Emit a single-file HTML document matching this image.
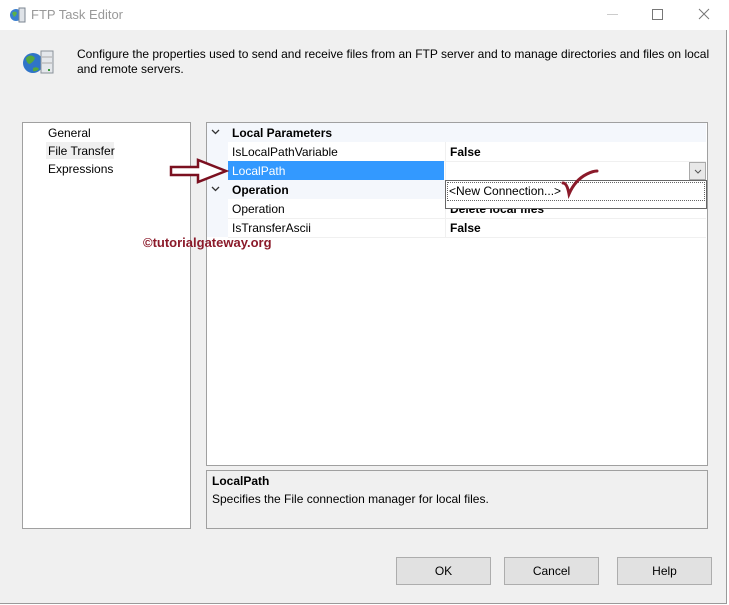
<!DOCTYPE html>
<html><head><style>
body{margin:0;width:729px;height:605px;background:#fff;font-family:"Liberation Sans",sans-serif;font-size:12px;color:#000;position:relative;overflow:hidden}
.a{position:absolute}
.win{left:0;top:30px;width:726px;height:573px;background:#f0f0f0;border-right:1px solid #9a9a9a;border-bottom:1px solid #9a9a9a}
.row{position:absolute;left:228px;width:478px;height:19px;border-bottom:1px solid #f0f0f0}
.lab{position:absolute;left:4px;top:3px}
.val{position:absolute;left:222px;top:3px;font-weight:bold}
.btn{position:absolute;top:557px;width:93px;height:26px;background:#e1e1e1;border:1px solid #adadad;text-align:center;line-height:26px}
</style></head><body>
<div class="a win"></div>
<svg class="a" style="left:9px;top:6px" width="17" height="17"><circle cx="7" cy="9" r="6" fill="#3a7fd0"/><path d="M3 7 q3-3 5 0 q-1 3-3 4z" fill="#5cb04a"/><rect x="10" y="2" width="6" height="14" fill="#dfe3e8" stroke="#7b8590"/></svg>
<div class="a" style="left:31px;top:7px;color:#999;font-size:13px">FTP Task Editor</div>
<div class="a" style="left:607px;top:14px;width:11px;height:1px;background:#ccc"></div>
<div class="a" style="left:652px;top:9px;width:9px;height:9px;border:1px solid #777"></div>
<svg class="a" style="left:698px;top:8px" width="12" height="12"><path d="M1 1 L11 11 M11 1 L1 11" stroke="#777" stroke-width="1"/></svg>
<svg class="a" style="left:21px;top:48px" width="34" height="28"><circle cx="12" cy="15" r="10" fill="#2f74c8"/><path d="M5 10 q5-5 9 0 q-2 5-6 6 q-3-2-3-6z M12 20 q4-2 6 1 q-3 3-6 2z" fill="#54a83e"/><rect x="20" y="3" width="12" height="22" fill="#e4e7eb" stroke="#8a929a"/><line x1="21" y1="9" x2="31" y2="9" stroke="#aaa"/><line x1="21" y1="15" x2="31" y2="15" stroke="#aaa"/><rect x="27" y="21" width="2" height="2" fill="#3a9a3a"/></svg>
<div class="a" style="left:77px;top:47px;line-height:15px;width:640px">Configure the properties used to send and receive files from an FTP server and to manage directories and files on local and remote servers.</div>
<div class="a" style="left:22px;top:122px;width:167px;height:405px;background:#fff;border:1px solid #a0a0a0"></div>
<div class="a" style="left:48px;top:126px">General</div>
<div class="a" style="left:46px;top:142px;width:68px;height:17px;background:#f0f0f0"></div>
<div class="a" style="left:48px;top:144px">File Transfer</div>
<div class="a" style="left:48px;top:162px">Expressions</div>
<div class="a" style="left:206px;top:122px;width:500px;height:342px;background:#fff;border:1px solid #a0a0a0"></div>
<div class="a" style="left:207px;top:123px;width:21px;height:114px;background:#f4f7fc"></div>
<div class="a" style="left:207px;top:123px;width:499px;height:19px;background:#f4f7fc"></div>
<svg class="a" style="left:211px;top:129px" width="9" height="6"><path d="M1 1 L4.5 4.5 L8 1" stroke="#333" stroke-width="1.3" fill="none"/></svg>
<div class="a" style="left:232px;top:126px;font-weight:bold">Local Parameters</div>
<div class="row" style="top:142px"><span class="lab">IsLocalPathVariable</span><span class="val">False</span></div>
<div class="row" style="top:161px"><div class="a" style="left:0;top:0;width:216px;height:19px;background:#3399ff"></div><span class="lab" style="color:#fff">LocalPath</span>
<div class="a" style="left:461px;top:1px;width:15px;height:16px;background:#e8e8e8;border:1px solid #aaa"><svg class="a" style="left:4px;top:6px" width="8" height="5"><path d="M1 1 L4 4 L7 1" stroke="#555" fill="none"/></svg></div></div>
<div class="a" style="left:207px;top:180px;width:499px;height:19px;background:#f4f7fc"></div>
<svg class="a" style="left:211px;top:186px" width="9" height="6"><path d="M1 1 L4.5 4.5 L8 1" stroke="#333" stroke-width="1.3" fill="none"/></svg>
<div class="a" style="left:232px;top:183px;font-weight:bold">Operation</div>
<div class="row" style="top:199px"><span class="lab">Operation</span><span class="val">Delete local files</span></div>
<div class="row" style="top:218px"><span class="lab">IsTransferAscii</span><span class="val">False</span></div>
<div class="a" style="left:445px;top:142px;width:1px;height:95px;background:#f0f0f0"></div>
<div class="a" style="left:445px;top:180px;width:260px;height:27px;background:#fff;border:1px solid #666"><div class="a" style="left:1px;top:1px;width:256px;height:17px;border:1px dotted #666"></div><span class="a" style="left:3px;top:3px">&lt;New Connection...&gt;</span></div>
<svg class="a" style="left:560px;top:165px" width="50" height="35"><path d="M3 18 q4 0 6 11 q6-14 18-20 q6-3 10-3" stroke="#8b1a2a" stroke-width="3" fill="none" stroke-linecap="round"/></svg>
<svg class="a" style="left:168px;top:158px" width="62" height="26"><path d="M3 9 H30 V2 L58 13 L30 24 V17 H3 Z" fill="#fff" stroke="#7b1020" stroke-width="2.5"/></svg>
<div class="a" style="left:143px;top:235px;color:#8b1a2a;font-weight:bold;font-size:13px">©tutorialgateway.org</div>
<div class="a" style="left:206px;top:470px;width:500px;height:57px;border:1px solid #a0a0a0;background:#f0f0f0"></div>
<div class="a" style="left:212px;top:474px;font-weight:bold">LocalPath</div>
<div class="a" style="left:212px;top:492px">Specifies the File connection manager for local files.</div>
<div class="btn" style="left:396px">OK</div>
<div class="btn" style="left:504px">Cancel</div>
<div class="btn" style="left:617px">Help</div>
</body></html>
